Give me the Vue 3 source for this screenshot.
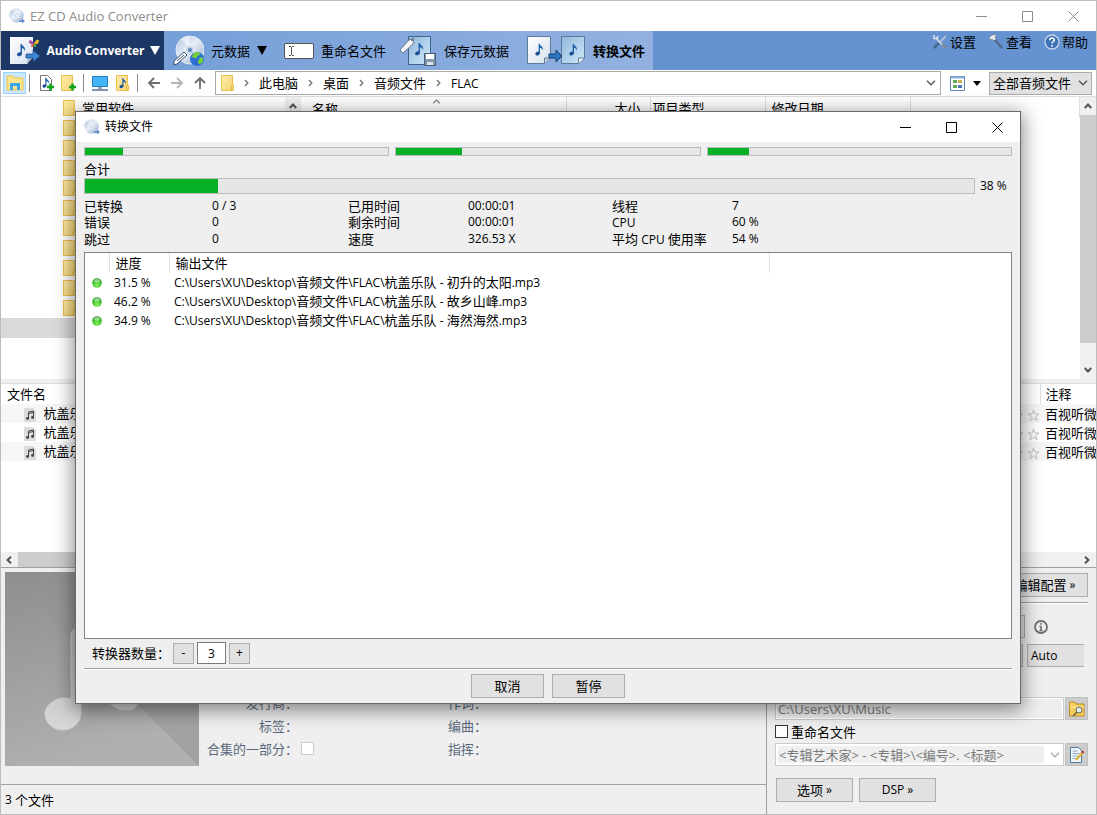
<template>
  <svg class="defs" aria-hidden="true">
    <defs>
      <linearGradient id="folderFill" x1="0" y1="0" x2="1" y2="1">
        <stop offset="0" stop-color="#ffedaa" />
        <stop offset="1" stop-color="#f2d374" />
      </linearGradient>
      <linearGradient id="discFill" x1="0" y1="0" x2="1" y2="1">
        <stop offset="0" stop-color="#a9bfd9" />
        <stop offset="0.45" stop-color="#e6eef7" />
        <stop offset="1" stop-color="#8fa9cb" />
      </linearGradient>
      <linearGradient id="pageFill" x1="0" y1="0" x2="1" y2="1">
        <stop offset="0" stop-color="#ffffff" />
        <stop offset="1" stop-color="#d5e0ee" />
      </linearGradient>
      <linearGradient id="bluePage" x1="0" y1="0" x2="1" y2="1">
        <stop offset="0" stop-color="#8fb8dc" />
        <stop offset="1" stop-color="#d3e8f8" />
      </linearGradient>
      <radialGradient id="ledFill" cx="0.5" cy="0.75" r="0.7">
        <stop offset="0" stop-color="#8cf25e" />
        <stop offset="0.6" stop-color="#3fc52e" />
        <stop offset="1" stop-color="#2c9a2a" />
      </radialGradient>
      <symbol id="disc" viewBox="0 0 16 16">
        <circle cx="7.5" cy="7.5" r="7.3" fill="url(#discFill)" />
        <path d="M7.5 7.5 3 1.6A7.3 7.3 0 0 1 8 .2z" fill="#fff" opacity="0.4" />
        <circle cx="7.5" cy="7.5" r="2.6" fill="#c3d2e6" stroke="#f5f8fc" />
        <circle cx="7.5" cy="7.5" r="1" fill="#fff" />
        <path d="M10 12.500h3v-2l3 2.500-3 2.500V14h-3z" fill="#5f8bc9" />
      </symbol>
      <symbol id="folder" viewBox="0 0 13 16">
        <path d="M.5.5h11v10h1v5H.5z" fill="url(#folderFill)" stroke="#e8c14b" />
        <path d="M10.5 15.5v-5h2" fill="none" stroke="#e3b93f" />
      </symbol>
      <symbol id="note" viewBox="0 0 12 16">
        <path d="M5.2 1v10.2" stroke="#1c5fa8" stroke-width="1.5" />
        <path d="M5 .5c.8 2.8 5.5 3.2 4.2 8.2C8.800 6 6.800 5.500 5 5.200z" fill="#1c5fa8" />
        <ellipse cx="3.300" cy="12" rx="2.700" ry="2.100" fill="#1b4f94" transform="rotate(-18 3.300 12)" />
      </symbol>
      <symbol id="star" viewBox="0 0 13 13">
        <path
          d="m6.500 1 1.400 4h4.100L8.700 7.500 10 11.700 6.500 9.200 3 11.700l1.300-4.200L1 5h4.100z"
          fill="none"
          stroke="#c3c3c3"
        />
      </symbol>
      <symbol id="chev" viewBox="0 0 10 6">
        <path d="M1 .8 5 4.800 9 .8" fill="none" stroke="currentColor" stroke-width="1.300" />
      </symbol>
      <symbol id="crumb" viewBox="0 0 5 8">
        <path d="m1 1 2.800 3L1 7" fill="none" stroke="#777" stroke-width="1.400" />
      </symbol>
      <symbol id="arrow" viewBox="0 0 8 6">
        <path d="M.8 5 4 1.500 7.200 5" fill="none" stroke="#505050" stroke-width="1.900" />
      </symbol>
    </defs>
  </svg>

  <div class="window">
    <header class="titlebar">
      <svg class="i16"><use href="#disc" /></svg>
      <h1>EZ CD Audio Converter</h1>
      <div class="caption">
        <button type="button" aria-label="最小化"><svg viewBox="0 0 11 11"><path d="M0 5.500h11" /></svg></button>
        <button type="button" aria-label="最大化"><svg viewBox="0 0 11 11"><path d="M.5.5h10v10H.5z" /></svg></button>
        <button type="button" aria-label="关闭"><svg viewBox="0 0 11 11"><path d="m.5.5 10 10M10.500.5l-10 10" /></svg></button>
      </div>
    </header>

    <nav class="toolbar">
      <button class="mode" type="button">
        <svg class="big" viewBox="0 0 32 30">
          <path d="M1 1h23v20l-6 7H1z" fill="url(#pageFill)" />
          <path d="m18 28 1-6 5-1z" fill="#a9b9cd" />
          <use href="#note" x="7" y="7" width="12" height="15" />
          <path d="M17 18h7v-4l7 6-7 6v-4h-7z" fill="#3c86d3" stroke="#163f7c" stroke-width="0.700" />
          <path d="M25 8c-2-5-6-4-5-2 0 2 3 3 5 2z" fill="#b04ea0" />
          <path d="M25 8c1-5 5-5 5-3s-2 4-5 3z" fill="#e2b62e" />
          <path d="M25 8c-3 0-4 3-2 3s2-1 2-3z" fill="#d65c35" />
          <path d="M25 8c3 0 3 3 1 3s-1-1-1-3z" fill="#53a63a" />
        </svg>
        <span>Audio Converter</span>
        <svg class="tri" viewBox="0 0 10 9"><path d="M0 0h10L5 9z" fill="currentColor" /></svg>
      </button>
      <div class="actions">
        <button type="button">
          <svg class="big" viewBox="0 0 32 32">
            <circle cx="18" cy="15" r="14" fill="url(#discFill)" stroke="#e4ebf3" />
            <path d="M18 15 9 4a14 14 0 0 1 8-3z" fill="#fff" opacity="0.500" />
            <circle cx="18" cy="15" r="5" fill="#c6d8ea" stroke="#f7fafd" />
            <circle cx="18" cy="15" r="2" fill="#5b89bd" />
            <path d="m2 26 10-9 3 3-10 9-3 1z" fill="#fff" stroke="#36506f" />
            <path d="m5 26 7-6" stroke="#36506f" />
            <circle cx="25" cy="24" r="7" fill="#2c6fd0" />
            <path d="M21 19c3-3 7-2 7 0s-3 1-3 3-3 1-5 0zM27 23c3-2 5 0 4 3s-4 4-5 2 2-3 1-5z" fill="#74cf3a" />
          </svg>
          <span>元数据</span>
          <svg class="tri" viewBox="0 0 10 9"><path d="M0 0h10L5 9z" fill="currentColor" /></svg>
        </button>
        <button type="button">
          <svg class="rename" viewBox="0 0 30 16">
            <rect x="0.500" y="0.500" width="29" height="15" rx="1.500" fill="#fff" stroke="#555" />
            <path d="M5 3.500h2M8 3.500h2M7.500 4v8M5 12.500h2M8 12.500h2" stroke="#555" />
          </svg>
          <span>重命名文件</span>
        </button>
        <button type="button">
          <svg class="save" viewBox="0 0 38 32">
            <path d="M9.500 1.500h22v28h-22z" fill="url(#bluePage)" stroke="#3f648c" />
            <use href="#note" x="15" y="7" width="12" height="15" />
            <path d="m1 15 9-10 5-2-1 6-10 9z" fill="#f7f8fa" stroke="#6b7888" />
            <circle cx="13" cy="5" r="1" fill="#4b5c70" />
            <path d="M25.500 18.500h11v12h-11z" fill="#8197ab" stroke="#4a6078" />
            <path d="M27 19h8v5h-8z" fill="#fff" />
            <path d="M28 27h6v3h-6z" fill="#dce4ec" />
          </svg>
          <span>保存元数据</span>
        </button>
        <button type="button" class="strong">
          <svg class="convert" viewBox="0 0 60 32">
            <path d="M1.500 1.500h23v22l-6 5h-17z" fill="url(#pageFill)" stroke="#627b99" />
            <path d="M18.500 28.500V23h6" fill="#bccbdc" stroke="#627b99" />
            <path d="M35.500 1.500h23v22l-6 5h-17z" fill="url(#bluePage)" stroke="#5e7898" />
            <path d="M52.500 28.500V23h6" fill="#eaf3fb" stroke="#627b99" />
            <use href="#note" x="8" y="8" width="12" height="14" />
            <use href="#note" x="42" y="8" width="12" height="14" />
            <path d="M23 19h7v-4l6 6-6 6v-4h-7z" fill="#2a78c4" stroke="#173e70" />
          </svg>
          <span>转换文件</span>
        </button>
      </div>
      <div class="links">
        <button type="button">
          <svg class="i16" viewBox="0 0 16 16">
            <path d="m4 4 9 10" stroke="#d5dde3" stroke-width="1.600" />
            <path d="M2 1v3.500h3L6 2" fill="none" stroke="#dfe5e8" stroke-width="1.500" />
            <path d="M14 2 6 10" stroke="#c5ced5" stroke-width="1.500" />
            <path d="m2 14 5-5" stroke="#45668e" stroke-width="2.500" />
            <path d="m10 10 4 4" stroke="#7d8a95" stroke-width="2.500" />
          </svg>
          <span>设置</span>
        </button>
        <button type="button">
          <svg class="i16" viewBox="0 0 16 16">
            <path d="M1 4c2-3 4-4 8-3L7 3l1 2-2 2-2-2-2 1z" fill="#e7ebed" stroke="#707c85" stroke-width="0.700" />
            <path d="m7 6 7 8" stroke="#4f6c8c" stroke-width="2.500" />
          </svg>
          <span>查看</span>
        </button>
        <button type="button">
          <svg class="i16" viewBox="0 0 16 16">
            <circle cx="8" cy="8" r="7" fill="#3f72b4" stroke="#c9d6e6" stroke-width="1.300" />
            <path d="M5.700 6.300c0-3 4.800-3 4.600-.2C10.200 7.500 8 7.600 8 9.500M8 11v1.700" fill="none" stroke="#fff" stroke-width="1.500" />
          </svg>
          <span>帮助</span>
        </button>
      </div>
    </nav>

    <div class="address">
      <button class="tool on" type="button" aria-label="文件夹">
        <svg viewBox="0 0 18 16">
          <path d="M1 1h6l2 2h8v12H1z" fill="#ffe48f" stroke="#e9c353" />
          <path d="M4 15V8h10v7h-3v-4H7v4z" fill="#3ba9e8" />
        </svg>
      </button>
      <i class="bar"></i>
      <button class="tool" type="button" aria-label="添加文件">
        <svg viewBox="0 0 18 16">
          <path d="M3.500.5h7l4 4v11h-11z" fill="#fff" stroke="#777" />
          <use href="#note" x="5" y="2" width="9" height="12" />
          <path d="M10 12h7M13.500 8.500v7" stroke="#12a41b" stroke-width="2.500" />
        </svg>
      </button>
      <button class="tool" type="button" aria-label="添加文件夹">
        <svg viewBox="0 0 18 16">
          <use href="#folder" x="1" width="13" height="16" />
          <path d="M9 12h7M12.500 8.500v7" stroke="#12a41b" stroke-width="2.500" />
        </svg>
      </button>
      <i class="bar"></i>
      <button class="tool" type="button" aria-label="桌面">
        <svg viewBox="0 0 18 16">
          <path d="M1.500 1.500h15v10h-15z" fill="#42b3f4" stroke="#2180bd" />
          <path d="M7 12h4v2H7z" fill="#9ab" />
          <path d="M1 15h16" stroke="#8294a7" stroke-width="2" />
        </svg>
      </button>
      <button class="tool" type="button" aria-label="音乐">
        <svg viewBox="0 0 18 16">
          <use href="#folder" x="2" width="13" height="16" />
          <use href="#note" x="5" y="2" width="9" height="13" />
        </svg>
      </button>
      <i class="bar"></i>
      <button class="tool nav" type="button" aria-label="后退">
        <svg viewBox="0 0 14 14"><path d="M13 7H2M7 2 2 7l5 5" /></svg>
      </button>
      <button class="tool nav dim" type="button" aria-label="前进">
        <svg viewBox="0 0 14 14"><path d="M1 7h11M7 2l5 5-5 5" /></svg>
      </button>
      <button class="tool nav" type="button" aria-label="向上">
        <svg viewBox="0 0 14 14"><path d="M7 13V2M2 7l5-5 5 5" /></svg>
      </button>
      <div class="path">
        <svg class="folder"><use href="#folder" /></svg>
        <template v-for="crumb in crumbs" :key="crumb">
          <svg class="sep"><use href="#crumb" /></svg>
          <a href="#"><Mixed :text="crumb" /></a>
        </template>
        <svg class="chev"><use href="#chev" /></svg>
      </div>
      <button class="view" type="button" aria-label="视图">
        <svg width="15" height="15" viewBox="0 0 15 15">
          <path d="M.5.5h14v14H.5z" fill="#fff" stroke="#5d86b3" />
          <path d="M1 1.500h13" stroke="#8fb5dc" stroke-width="2" />
          <path d="M3 4h4v3H3zM3 9h4v3H3z" fill="#5fae55" />
          <path d="M8 4h4v3H8z" fill="#c9b24c" />
          <path d="M8 9h4v3H8z" fill="#4b79bb" />
        </svg>
        <svg width="8" height="5" viewBox="0 0 8 5"><path d="M0 0h8L4 5z" /></svg>
      </button>
      <div class="combo filter">
        <select aria-label="文件类型"><option>全部音频文件</option></select>
        <svg class="chev"><use href="#chev" /></svg>
      </div>
    </div>

    <section class="explorer">
      <div class="tree">
        <ul>
          <li v-for="n in 11" :key="n">
            <svg class="folder"><use href="#folder" /></svg>
            <span v-if="n === 1">常用软件</span>
          </li>
          <li class="selected"></li>
        </ul>
        <div class="vscroll"><svg><use href="#arrow" /></svg></div>
      </div>
      <div class="files">
        <table>
          <thead>
            <tr>
              <th class="c-name">名称<svg class="sort"><use href="#chev" /></svg></th>
              <th class="c-size">大小</th>
              <th class="c-type">项目类型</th>
              <th class="c-date">修改日期</th>
              <th></th>
            </tr>
          </thead>
        </table>
        <div class="vscroll">
          <svg><use href="#arrow" /></svg>
          <div class="thumb"></div>
          <svg class="down"><use href="#arrow" /></svg>
        </div>
      </div>
    </section>

    <section class="queue">
      <table>
        <thead>
          <tr>
            <th>文件名</th>
            <th class="c-rate"></th>
            <th class="c-note">注释</th>
          </tr>
        </thead>
        <tbody>
          <tr v-for="job in jobs" :key="job.title">
            <td class="c-file">
              <svg viewBox="0 0 12 14">
                <path d="M0 0h9l3 3v11H0z" fill="#dcdcdc" />
                <path d="M4.500 10.500V4l5-1v6.500M4.500 5.500l5-1" fill="none" stroke="#444" />
                <circle cx="3.500" cy="10.500" r="1.400" fill="#444" />
                <circle cx="8.500" cy="9.500" r="1.400" fill="#444" />
              </svg>
              杭盖乐队
            </td>
            <td class="c-rate">
              <svg v-for="n in 3" :key="n"><use href="#star" /></svg>
            </td>
            <td class="c-note">百视听微</td>
          </tr>
        </tbody>
      </table>
      <div class="hscroll">
        <svg class="left"><use href="#arrow" /></svg>
        <div class="thumb"></div>
        <svg class="right"><use href="#arrow" /></svg>
      </div>
    </section>

    <section class="bottom">
      <div class="info">
        <div class="meta">
          <svg class="cover" viewBox="0 0 194 194">
            <defs>
              <linearGradient id="coverFill" x1="0" y1="0" x2="0.300" y2="1">
                <stop offset="0" stop-color="#8e8e8e" />
                <stop offset="1" stop-color="#b0b0b0" />
              </linearGradient>
              <linearGradient id="coverShade" x1="0" y1="0" x2="0" y2="1">
                <stop offset="0.100" stop-color="#808080" stop-opacity="0" />
                <stop offset="1" stop-color="#808080" stop-opacity="0.350" />
              </linearGradient>
              <linearGradient id="coverNote" x1="0" y1="0" x2="0" y2="1">
                <stop offset="0" stop-color="#b8b8b8" />
                <stop offset="1" stop-color="#d8d8d8" />
              </linearGradient>
            </defs>
            <path d="M0 0h194v194H0z" fill="url(#coverFill)" />
            <path d="M0 0 194 194V0z" fill="url(#coverShade)" />
            <path
              d="M66 64c0-5 2-7 7-7h60v72c0 7-6 9-13 9s-17-5-17-12 10-17 20-14V75H76v66c0 9-8 17-18 17s-18-7-18-16 12-19 26-15z"
              fill="url(#coverNote)"
              stroke="#cdcdcd"
            />
          </svg>
          <div class="fields">
            <span>发行商：</span>
            <label for="part">合集的一部分：</label>
            <span class="mid">标签：</span>
            <input id="part" type="checkbox" />
          </div>
          <div class="fields second">
            <span>作词：</span>
            <span>编曲：</span>
            <span>指挥：</span>
          </div>
        </div>
        <footer><Mixed text="3 个文件" /></footer>
      </div>
      <aside>
        <div class="line end">
          <button class="btn profile" type="button"><Mixed text="编辑配置 »" /></button>
        </div>
        <hr />
        <div class="line format">
          <div class="stub"></div>
          <svg class="about" viewBox="0 0 14 14">
            <circle cx="7" cy="7" r="6" fill="none" stroke="#707070" stroke-width="1.800" />
            <path d="M7 3v1.800M7 6v5M5.500 6.500H7M5.500 10.500h3" stroke="#707070" stroke-width="1.600" />
          </svg>
        </div>
        <div class="line bits">
          <div class="stub"></div>
          <select class="auto" aria-label="采样率"><option>Auto</option></select>
        </div>
        <div class="line">
          <input type="text" class="music latin" value="C:\Users\XU\Music" aria-label="输出文件夹" disabled />
          <button class="square" type="button" aria-label="浏览">
            <svg viewBox="0 0 16 16">
              <path d="M.5 3.500V1h5l1.500 2h8v12H.5z" fill="#f6cf5c" stroke="#bb8d25" />
              <path d="M1 6h14" stroke="#fff0b0" />
              <circle cx="10" cy="9" r="3" fill="#e1ebf2" stroke="#6a6a5a" />
              <path d="m8 11-4 4" stroke="#6a5a3a" stroke-width="1.500" />
            </svg>
          </button>
        </div>
        <label class="rename-row"><input type="checkbox" />重命名文件</label>
        <div class="line">
          <div class="combo pattern">
            <select aria-label="文件名格式" disabled>
              <option>&lt;专辑艺术家&gt; - &lt;专辑&gt;\&lt;编号&gt;. &lt;标题&gt;</option>
            </select>
            <svg class="chev"><use href="#chev" /></svg>
          </div>
          <button class="square" type="button" aria-label="编辑格式">
            <svg viewBox="0 0 16 16">
              <path d="M1.500.5h8l3 3v12h-11z" fill="#eef5fb" stroke="#54779c" />
              <path d="M3.500 4h5M3.500 6.500h7M3.500 9h5M3.500 11.500h3" stroke="#89a9c9" />
              <path d="m7 13 6-7" stroke="#d8b83a" stroke-width="2.500" />
              <path d="m13 6 1.500-1.800" stroke="#c33" stroke-width="2.500" />
            </svg>
          </button>
        </div>
        <div class="line options">
          <button class="btn" type="button"><Mixed text="选项 »" /></button>
          <button class="btn" type="button"><Mixed text="DSP »" /></button>
        </div>
      </aside>
    </section>

    <div class="dialog" role="dialog" aria-labelledby="dialog-title">
      <header class="titlebar">
        <svg class="i16"><use href="#disc" /></svg>
        <h2 id="dialog-title">转换文件</h2>
        <div class="caption">
          <button type="button" aria-label="最小化"><svg viewBox="0 0 11 11"><path d="M0 5.500h11" /></svg></button>
          <button type="button" aria-label="最大化"><svg viewBox="0 0 11 11"><path d="M.5.5h10v10H.5z" /></svg></button>
          <button type="button" aria-label="关闭"><svg viewBox="0 0 11 11"><path d="m.5.5 10 10M10.500.5l-10 10" /></svg></button>
        </div>
      </header>
      <div class="body">
        <div class="threads">
          <progress v-for="job in jobs" :key="job.title" :value="job.bar" max="100" :aria-label="job.title"></progress>
        </div>
        <label class="sum" for="total">合计</label>
        <div class="total">
          <progress id="total" value="15" max="100"></progress>
          <span class="latin">38 %</span>
        </div>
        <dl class="stats">
          <template v-for="[name, value] in stats" :key="name">
            <dt><Mixed :text="name" /></dt>
            <dd class="latin">{{ value }}</dd>
          </template>
        </dl>
        <div class="output">
          <table>
            <thead>
              <tr>
                <th class="o-led"></th>
                <th class="o-pct">进度</th>
                <th class="o-file">输出文件</th>
                <th></th>
              </tr>
            </thead>
            <tbody>
              <tr v-for="job in jobs" :key="job.title">
                <td class="o-led">
                  <svg viewBox="0 0 10 10">
                    <circle cx="5" cy="5" r="4.800" fill="url(#ledFill)" />
                    <ellipse cx="5" cy="2.800" rx="3" ry="1.800" fill="#fff" opacity="0.450" />
                  </svg>
                </td>
                <td class="latin">{{ job.percent }} %</td>
                <td colspan="2"><Mixed :text="folder + job.title + '.mp3'" /></td>
              </tr>
            </tbody>
          </table>
        </div>
        <div class="count">
          <label for="count">转换器数量：</label>
          <button type="button" class="step" @click="count = Math.max(1, count - 1)">-</button>
          <input id="count" v-model.number="count" class="latin" type="text" />
          <button type="button" class="step" @click="count++">+</button>
        </div>
        <hr />
        <div class="buttons">
          <button class="btn" type="button">取消</button>
          <button class="btn" type="button">暂停</button>
        </div>
      </div>
    </div>
  </div>
</template>

<script setup>
import { h, ref } from "vue";

// latin runs are set one size smaller than the chinese text
const Mixed = (props) =>
  props.text
    .split(/([\x20-\x7e»]+)/)
    .filter(Boolean)
    .map((part) => (/^[\x20-\x7e»]/.test(part) ? h("span", { class: "latin" }, part) : part));
Mixed.props = ["text"];

const count = ref(3);
const crumbs = ["此电脑", "桌面", "音频文件", "FLAC"];
const folder = "C:\\Users\\XU\\Desktop\\音频文件\\FLAC\\";

const jobs = [
  { title: "杭盖乐队 - 初升的太阳", percent: "31.5", bar: 12.5 },
  { title: "杭盖乐队 - 故乡山峰", percent: "46.2", bar: 21.5 },
  { title: "杭盖乐队 - 海然海然", percent: "34.9", bar: 13.5 },
];

const stats = [
  ["已转换", "0 / 3"],
  ["已用时间", "00:00:01"],
  ["线程", "7"],
  ["错误", "0"],
  ["剩余时间", "00:00:01"],
  ["CPU", "60 %"],
  ["跳过", "0"],
  ["速度", "326.53 X"],
  ["平均 CPU 使用率", "54 %"],
];
</script>

<style>
body {
  margin: 0;
}
.latin {
  font-size: 12px;
}
</style>

<style scoped>
.defs {
  position: absolute;
  width: 0;
  height: 0;
}
.window {
  position: relative;
  display: flex;
  flex-direction: column;
  box-sizing: border-box;
  min-height: 100vh;
  border: 1px solid #bcbcbc;
  background: #efefef;
  color: #000;
  font: 13px/16px "Open Sans", "Noto Sans CJK SC", sans-serif;
  overflow: hidden;
}
.window * {
  box-sizing: border-box;
}
button,
input,
select {
  margin: 0;
  font-family: inherit;
  font-size: 13px;
  color: inherit;
  border-radius: 0;
}
button {
  display: flex;
  align-items: center;
  justify-content: center;
  padding: 0;
  border: 0;
  background: none;
  line-height: 16px;
  white-space: nowrap;
}
a {
  color: inherit;
  text-decoration: none;
}
svg {
  flex: none;
}
table {
  width: 100%;
  border-collapse: collapse;
  table-layout: fixed;
}
th {
  font-weight: normal;
  text-align: left;
}
th,
td {
  padding: 0;
  white-space: nowrap;
  overflow: hidden;
}
hr {
  width: 100%;
  height: 2px;
  margin: 0;
  border: 0;
  background: linear-gradient(#a0a0a0 50%, #fff 50%);
}
.i16 {
  width: 16px;
  height: 16px;
}
.folder {
  width: 13px;
  height: 16px;
}
.chev {
  width: 10px;
  height: 6px;
  color: #555;
}

.titlebar {
  display: flex;
  align-items: center;
  flex: none;
  height: 30px;
  padding-left: 8px;
  background: #fff;
}
.titlebar h1,
.titlebar h2 {
  flex: 1;
  margin: 0 0 0 5px;
  font-size: 12px;
  font-weight: normal;
}
.titlebar h1 {
  color: #8c8c8c;
  font-size: 13px;
}
.caption {
  display: flex;
}
.caption button {
  width: 46px;
  height: 28px;
}
.caption svg {
  width: 11px;
  height: 11px;
  fill: none;
  stroke: #8c8c8c;
}

.toolbar {
  display: flex;
  flex: none;
  height: 39px;
  background: #6593d1;
}
.mode {
  width: 163px;
  gap: 5px;
  padding-left: 4px;
  background: #1c3766;
  color: #fff;
  font-size: 12px;
  font-weight: bold;
}
.big {
  width: 32px;
  height: 32px;
}
.tri {
  width: 10px;
  height: 9px;
}
.actions {
  display: flex;
  gap: 17px;
  padding: 0 8px;
  background: linear-gradient(90deg, #769fd8, #92b1e0);
}
.actions button {
  gap: 7px;
}
.rename {
  width: 30px;
  height: 16px;
}
.save {
  width: 38px;
  height: 32px;
  margin-left: -4px;
}
.convert {
  width: 60px;
  height: 32px;
}
.strong {
  font-weight: bold;
}
.links {
  display: flex;
  align-items: flex-start;
  gap: 12px;
  margin-left: auto;
  padding: 3px 8px 0 0;
}
.links button {
  gap: 2px;
}

.address {
  display: flex;
  align-items: center;
  flex: none;
  height: 27px;
  padding: 0 4px 0 2px;
  border-bottom: 1px solid #dedede;
  background: #fff;
}
.tool {
  width: 23px;
  height: 22px;
}
.tool svg {
  width: 18px;
  height: 16px;
}
.tool.on {
  border: 1px solid #99d1ff;
  background: #cce8ff;
}
.bar {
  width: 1px;
  height: 18px;
  margin: 0 4px 0 3px;
  background: #888;
}
.tool.nav svg {
  width: 14px;
  height: 14px;
  fill: none;
  stroke: #6d6d6d;
  stroke-width: 1.8;
}
.tool.dim svg {
  stroke: #b5b5b5;
}
.path {
  display: flex;
  align-items: center;
  flex: 1;
  height: 24px;
  margin-left: 4px;
  padding: 0 4px 0 5px;
  border: 1px solid #aaa;
}
.path .sep {
  width: 5px;
  height: 8px;
  margin: 0 10px;
}
.path .sep:first-of-type {
  margin-left: 9px;
}
.path .chev {
  margin-left: auto;
}
.view {
  gap: 8px;
  width: 48px;
}
.combo {
  display: grid;
  align-items: center;
}
.combo > * {
  grid-area: 1 / 1;
}
.combo select {
  appearance: none;
  width: 100%;
  height: 23px;
  padding: 0 3px;
  border: 1px solid #acacac;
  background: #e1e1e1;
  opacity: 1;
}
.combo .chev {
  justify-self: end;
  margin-right: 4px;
  pointer-events: none;
}
.filter {
  width: 103px;
}

.explorer {
  display: flex;
  flex: none;
  height: 282px;
  background: #fff;
}
.tree {
  display: flex;
  width: 300px;
}
.tree ul {
  flex: 1;
  margin: 0;
  padding: 1px 0 0;
  list-style: none;
}
.tree li {
  display: flex;
  align-items: center;
  gap: 6px;
  height: 20px;
  padding-left: 62px;
}
.tree .selected {
  background: #d9d9d9;
}
.vscroll {
  display: flex;
  flex-direction: column;
  align-items: center;
  width: 16px;
  background: #f0f0f0;
}
.vscroll svg,
.hscroll svg {
  width: 8px;
  height: 6px;
  margin: 6px 4px;
}
.vscroll .thumb {
  width: 100%;
  height: 228px;
  background: #cdcdcd;
}
.vscroll .down {
  margin-top: auto;
  transform: rotate(180deg);
}
.files {
  display: flex;
  align-items: flex-start;
  flex: 1;
}
.files .vscroll {
  flex: none;
  height: 100%;
}
.files th {
  height: 21px;
  padding: 0 6px;
  border-right: 1px solid #e0e0e0;
}
.files .c-name {
  width: 265px;
  padding-left: 11px;
}
.sort {
  width: 9px;
  height: 5px;
  margin: 0 0 10px 94px;
  color: #777;
  transform: rotate(180deg);
}
.files .c-size {
  width: 84px;
  padding-right: 9px;
  text-align: right;
}
.files .c-type {
  width: 115px;
  padding-left: 2px;
}
.files .c-date {
  width: 145px;
}

.queue {
  display: flex;
  flex-direction: column;
  flex: none;
  height: 185px;
  margin-top: 4px;
  border-top: 1px solid #e0e0e0;
  border-bottom: 1px solid #a0a0a0;
  background: #fff;
}
.queue th {
  height: 20px;
  padding-left: 6px;
}
.queue td {
  height: 19px;
}
.queue tbody tr:nth-child(odd) {
  background: #f6f6f6;
}
.c-file svg {
  width: 12px;
  height: 14px;
  margin: 0 4px 0 23px;
  vertical-align: middle;
}
.queue .c-rate {
  width: 60px;
  text-align: right;
}
.c-rate svg {
  width: 13px;
  height: 13px;
  margin-left: 3px;
  vertical-align: middle;
}
.queue .c-note {
  width: 56px;
  padding-left: 5px;
}
.queue th.c-note {
  border-left: 1px solid #e0e0e0;
}
.hscroll {
  display: flex;
  align-items: center;
  height: 15px;
  margin-top: auto;
  background: #f0f0f0;
}
.hscroll .thumb {
  width: 700px;
  height: 100%;
  background: #cdcdcd;
}
.hscroll .left {
  transform: rotate(-90deg);
}
.hscroll .right {
  margin-left: auto;
  transform: rotate(90deg);
}
.hscroll svg {
  margin-right: 5px;
}

.bottom {
  display: flex;
  flex: 1;
}
.info {
  display: flex;
  flex-direction: column;
  flex: 1;
  border-right: 1px solid #a0a0a0;
}
.meta {
  display: flex;
  align-items: flex-end;
  height: 216px;
  padding: 0 0 18px 4px;
}
.cover {
  width: 194px;
  height: 194px;
}
.fields {
  display: grid;
  grid-template-columns: 91px 16px;
  grid-template-rows: repeat(3, 23px);
  align-items: center;
  justify-items: end;
  margin: 0 0 6px 8px;
  color: #59687a;
  white-space: nowrap;
}
.fields > * {
  grid-column: 1;
}
.fields label {
  grid-row: 3;
}
.fields .mid {
  grid-row: 2;
}
.fields input {
  grid-area: 3 / 2;
}
.fields.second {
  margin-left: 82px;
}
input[type="checkbox"] {
  appearance: none;
  width: 13px;
  height: 13px;
  border: 1px solid #333;
  background: #fff;
}
.fields input[type="checkbox"] {
  border-color: #ccc;
}
footer {
  display: flex;
  align-items: center;
  flex: 1;
  padding-left: 4px;
  border-top: 1px solid #a0a0a0;
  white-space: pre;
}
aside {
  flex: none;
  width: 329px;
  padding: 5px 8px 0;
}
.line {
  display: flex;
  align-items: center;
  gap: 1px;
}
.end {
  justify-content: flex-end;
}
.btn {
  width: 77px;
  height: 24px;
  border: 1px solid #adadad;
  background: #e1e1e1;
  white-space: pre;
}
.profile {
  width: 86px;
}
aside hr {
  margin: 5px 0 11px;
}
.stub {
  width: 250px;
  height: 23px;
  border: 1px solid #acacac;
  background: #e1e1e1;
}
.about {
  width: 14px;
  height: 14px;
  margin-left: 8px;
}
.bits {
  gap: 4px;
  margin: 6px 0 30px;
}
.bits .stub {
  width: 248px;
}
.auto {
  appearance: none;
  width: 57px;
  height: 23px;
  padding: 0 3px;
  border: 1px solid #acacac;
  border-right: 0;
  background: #e1e1e1;
  font-size: 12px;
}
.music {
  flex: 1;
  height: 23px;
  padding: 0 2px;
  border: 1px solid #ccc;
  background: #efefef;
  box-shadow: inset 0 0 0 1px #fff;
  color: #7a7a7a;
}
.square {
  width: 23px;
  height: 23px;
  border: 1px solid #bfbfbf;
  background: #ccc;
}
.square svg {
  width: 16px;
  height: 16px;
}
.rename-row {
  display: flex;
  align-items: center;
  gap: 3px;
  height: 23px;
}
.pattern {
  flex: 1;
}
.pattern select {
  border-color: #ccc;
  background: linear-gradient(#efefef, #efefef) 2px 2px / calc(100% - 21px) calc(100% - 4px) no-repeat #fff;
  color: #7a7a7a;
}
.pattern .chev {
  color: #aaa;
}
.options {
  gap: 6px;
  margin-top: 12px;
  padding-left: 1px;
}

.dialog {
  position: absolute;
  top: 110px;
  right: 75px;
  bottom: 110px;
  left: 74px;
  display: flex;
  flex-direction: column;
  border: 1px solid #6a6a6a;
  background: #efefef;
  box-shadow: 0 4px 18px 2px rgba(0, 0, 0, 0.45);
}
.dialog .caption svg {
  stroke: #000;
}
.body {
  display: flex;
  flex-direction: column;
  flex: 1;
  padding: 5px 8px;
}
.threads {
  display: flex;
  gap: 6px;
}
progress {
  appearance: none;
  flex: 1;
  min-width: 0;
  height: 9px;
  border: 1px solid #bcbcbc;
  background: #e6e6e6;
}
progress::-webkit-progress-bar {
  background: #e6e6e6;
}
progress::-webkit-progress-value {
  background: #06b025;
}
.sum {
  margin: 5px 0 1px;
}
.total {
  display: flex;
  align-items: center;
  gap: 5px;
}
.total progress {
  height: 16px;
}
.total span {
  width: 32px;
}
.stats {
  display: grid;
  grid-template-columns: 128px 136px 120px 144px 120px 1fr;
  margin: 4px 0;
  white-space: pre;
}
.stats dd {
  margin: 0;
}
.output {
  flex: 1;
  border: 1px solid #828282;
  background: #fff;
}
.output th {
  height: 20px;
  padding-left: 6px;
  border-right: 1px solid #e0e0e0;
}
.output th:last-child {
  border-right: 0;
}
.output td {
  height: 19px;
  padding-left: 5px;
  white-space: pre;
}
.output .o-led {
  width: 24px;
  padding-left: 7px;
}
.o-led svg {
  display: block;
  width: 10px;
  height: 10px;
}
.output .o-pct {
  width: 60px;
}
.output .o-file {
  width: 600px;
}
.count {
  display: flex;
  align-items: center;
  gap: 3px;
  padding: 3px 8px 4px;
}
.count label {
  width: 78px;
  white-space: nowrap;
}
.step {
  width: 21px;
  height: 21px;
  border: 1px solid #adadad;
  background: #e1e1e1;
  font-size: 12px;
}
.count input {
  width: 29px;
  height: 22px;
  padding: 0;
  border: 1px solid #7a7a7a;
  background: #fff;
  font-size: 12px;
  text-align: center;
}
.buttons {
  display: flex;
  justify-content: center;
  gap: 8px;
  padding-top: 4px;
}
.buttons .btn {
  width: 73px;
}
</style>
